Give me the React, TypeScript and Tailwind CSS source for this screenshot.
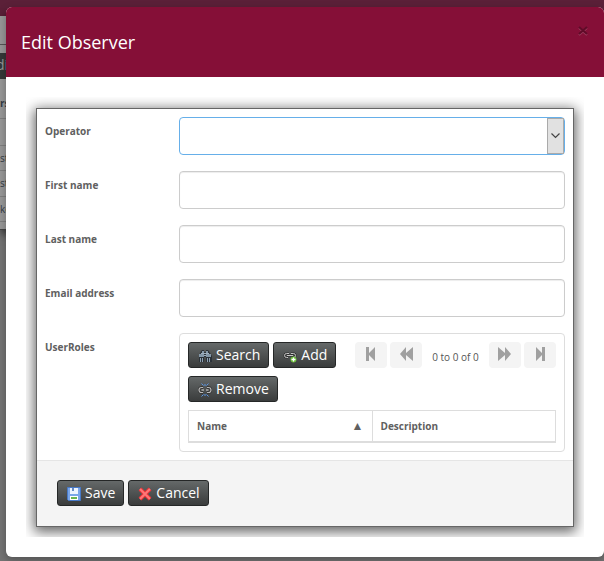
import type { ReactNode } from "react";

const darkButton =
  "inline-flex h-[26px] items-center gap-1 rounded-[3px] border border-[#252727] bg-linear-to-b from-[#656969] to-[#3a3c3c] pl-[9px] pr-2 text-[14px] leading-5 text-white";

function DarkButton({ icon, children }: { icon: ReactNode; children: ReactNode }) {
  return (
    <button type="button" className={darkButton}>
      {icon}
      <span>{children}</span>
    </button>
  );
}

function SearchIcon() {
  return (
    <svg width="14" height="14" viewBox="0 0 14 14" className="translate-y-px" aria-hidden="true">
      <path d="M4 1h2v2h2V1h2l2 3 2 3v6H8V8H6v5H1V7l1-3z" fill="#2b3239" />
      <path d="M4 2h2v2h2V2h2v2H4zM1 5h5v3H1zM8 5h5v3H8z" fill="#8497a8" />
      <path d="M3 4.500h8M6 6.500h2" stroke="#9fb0bf" />
      <path d="M2 9h1v4H2zM4 9h1v4H4zM9 9h1v4H9zM11 9h1v4h-1z" fill="#8fa2b3" />
    </svg>
  );
}

function LinkAddIcon() {
  return (
    <svg width="14" height="14" viewBox="0 0 14 14" className="translate-y-px" aria-hidden="true">
      <path d="M5 8.500H3.500a2 2 0 0 1 0-4H6M8 4.500h2.500a2 2 0 0 1 0 4H9M4 6.500h6" fill="none" stroke="#2d2d2d" strokeWidth="2" />
      <path d="M5 8.500H3.500a2 2 0 0 1 0-4H6M8 4.500h2.500a2 2 0 0 1 0 4H9M4 6.500h6" fill="none" stroke="#c5c5c5" />
      <circle cx="10.500" cy="10.500" r="3" fill="#6abd38" />
      <path d="M10.500 8.500v4M8.500 10.500h4" stroke="#fff" strokeWidth="1.300" />
    </svg>
  );
}

function LinkBreakIcon() {
  return (
    <svg width="14" height="14" viewBox="0 0 14 14" className="translate-y-px" aria-hidden="true">
      <path d="M5 9.500H3.500a2.500 2.500 0 0 1 0-5H5M9 4.500h1.500a2.500 2.500 0 0 1 0 5H9" fill="none" stroke="#2d2d2d" strokeWidth="2.500" />
      <path d="M5 9.500H3.500a2.500 2.500 0 0 1 0-5H5M9 4.500h1.500a2.500 2.500 0 0 1 0 5H9" fill="none" stroke="#b8b8b8" strokeWidth="1.200" />
      <path d="M3.500 7H6M8 7h2.500" stroke="#d8d8d8" />
      <path d="M7 1v2M3.500.5l2 2M10.500.5l-2 2M7 11v2M3.500 13.500l2-2M10.500 13.500l-2-2" stroke="#5b96e6" />
    </svg>
  );
}

function DiskIcon() {
  return (
    <svg width="14" height="14" viewBox="0 0 14 14" className="translate-y-px" aria-hidden="true">
      <path d="M.5.5h13v13h-12l-1-1z" fill="#79a5e8" stroke="#4779c7" />
      <path d="M3 1h8v6H3z" fill="#edf4ff" />
      <path d="M5 1h2v3H5z" fill="#648ac4" />
      <path d="M3 9h8v4H3z" fill="#fff" />
      <path d="M4 10h6v2H4z" fill="#69b452" />
    </svg>
  );
}

function CrossIcon() {
  return (
    <svg width="14" height="14" viewBox="0 0 14 14" className="translate-y-px" aria-hidden="true">
      <path d="M2 2 12 12M12 2 2 12" stroke="#ed3338" strokeWidth="4" />
      <path d="M2 2 12 12M12 2 2 12" stroke="#ff7777" strokeWidth="2" />
    </svg>
  );
}

const pagerPaths = {
  first: "M11 4h3v6l6-6v14l-6-6v6h-3z",
  previous: "M16 4v6l7-6v14l-7-6v6l-6-7z",
  next: "M9 4l7 6V4l6 7-6 7v-6l-7 6z",
  last: "M12 4l6 6V4h3v14h-3v-6l-6 6z",
};

function PagerButton({ kind, label }: { kind: keyof typeof pagerPaths; label: string }) {
  return (
    <button type="button" aria-label={label} className="h-[26px] w-8 rounded bg-[#f4f4f4]">
      <svg width="32" height="26" viewBox="0 -1 32 26" fill="#a0a0a0" aria-hidden="true">
        <path d={pagerPaths[kind]} />
      </svg>
    </button>
  );
}

const rowClass = "grid grid-cols-[134px_minmax(0,1fr)]";
const labelClass = "pt-2 text-[10px] leading-3 font-bold text-[#606060]";
const inputClass =
  "h-[38px] w-full rounded border border-[#ccc] bg-white px-2 text-[14px] shadow-[inset_0_1px_1px_rgba(0,0,0,0.075)] outline-none";

function TextRow({ id, label }: { id: string; label: string }) {
  return (
    <div className={rowClass}>
      <label htmlFor={id} className={labelClass}>{label}</label>
      <input id={id} type="text" className={inputClass} />
    </div>
  );
}

function PageBehind() {
  return (
    <div aria-hidden="true" className="absolute inset-0 overflow-hidden bg-[#747474] text-[10px] leading-3 text-[#333b45]">
      <div className="h-4 bg-[#5b2038]" />
      <div className="h-[214px] border-b border-[#444] bg-[#989898] shadow-[0_4px_8px_rgba(0,0,0,0.5)]">
        <div className="h-[29px] border-b border-[#555]" />
        <div className="mt-2 h-[26px] bg-[#353838] text-[14px] leading-6 text-[#999]"><span className="-ml-1">di</span></div>
        <div className="h-[40px] border-b border-[#7f7f7f] pt-[18px] font-bold">rs</div>
        <div className="h-[27px] border-b border-[#7f7f7f]" />
        <div className="h-[25px] border-b border-[#7f7f7f] pt-1.5">st</div>
        <div className="h-[26px] border-b border-[#7f7f7f] pt-1.5">st</div>
        <div className="h-[25px] border-b border-[#7f7f7f] pt-1.5">ke</div>
      </div>
    </div>
  );
}

export default function App() {
  return (
    <div className="relative min-h-screen overflow-hidden pt-[7px] pb-1 pl-1.5 font-['Open_Sans','Noto_Sans',sans-serif]">
      <PageBehind />
      <section role="dialog" aria-labelledby="dialog-title" className="relative overflow-hidden rounded-md bg-white shadow-[0_3px_9px_rgba(0,0,0,0.3)]">
        <header className="flex h-[70px] items-center justify-between bg-[#850f37] px-[15px] text-white">
          <h1 id="dialog-title" className="text-[18px] leading-6">Edit Observer</h1>
          <button type="button" aria-label="Close" className="mb-[22px] flex h-4 w-3 items-center justify-center text-[#600b28]">
            <svg width="10" height="10" viewBox="0 0 10 10" fill="none" aria-hidden="true">
              <path d="m1 2 8 7M9 2 1 9" stroke="#9b3e5e" strokeWidth="2" />
              <path d="m1 1 8 7M9 1 1 8" stroke="currentColor" strokeWidth="2" />
            </svg>
          </button>
        </header>
        <div className="p-5">
          <div className="overflow-hidden pt-[11px] pr-2.5 pb-2.5 pl-2.5">
            <form className="border border-[#666] bg-white shadow-[0_3px_12px_2px_rgba(0,0,0,0.6)]" onSubmit={(event) => event.preventDefault()}>
              <div className="flex flex-col gap-4 p-2">
                <div className={rowClass}>
                  <label htmlFor="operator" className={labelClass}>Operator</label>
                  <div className="relative">
                    <select id="operator" className="h-[38px] w-full appearance-none rounded border border-[#66afe9] bg-white px-2 pr-5 text-[14px] outline-none">
                      <option value=""></option>
                    </select>
                    <span className="pointer-events-none absolute top-px right-px bottom-px flex w-[17px] items-center justify-center border border-[#aaa] bg-[#e1e1e1]">
                      <svg width="9" height="6" viewBox="0 0 9 6" fill="none" stroke="#444" strokeWidth="1.200" aria-hidden="true"><path d="m.5.5 4 4 4-4" /></svg>
                    </span>
                  </div>
                </div>
                <TextRow id="first-name" label="First name" />
                <TextRow id="last-name" label="Last name" />
                <TextRow id="email" label="Email address" />
                <div className={rowClass}>
                  <span className={labelClass}>UserRoles</span>
                  <div className="rounded border border-[#ddd] p-2">
                    <div className="flex items-start justify-between">
                      <div className="flex flex-1 flex-wrap gap-x-1 gap-y-2">
                        <DarkButton icon={<SearchIcon />}>Search</DarkButton>
                        <DarkButton icon={<LinkAddIcon />}>Add</DarkButton>
                        <DarkButton icon={<LinkBreakIcon />}>Remove</DarkButton>
                      </div>
                      <div className="flex shrink-0 items-center gap-[3px]">
                        <PagerButton kind="first" label="First page" />
                        <PagerButton kind="previous" label="Previous page" />
                        <span className="w-[61px] pt-1 text-center text-[10px] leading-4 whitespace-nowrap text-[#555]">0 to 0 of 0</span>
                        <PagerButton kind="next" label="Next page" />
                        <PagerButton kind="last" label="Last page" />
                      </div>
                    </div>
                    <table className="mt-2 w-full table-fixed border-collapse border border-[#ddd] text-left text-[10px] leading-3 text-[#606060]">
                      <thead>
                        <tr className="h-[31px] border-b-2 border-[#ddd]">
                          <th className="border-r border-[#ddd] px-2 font-bold"><div className="flex justify-between"><span>Name</span><span aria-hidden="true" className="text-[12px]">▲</span></div></th>
                          <th className="px-2 font-bold">Description</th>
                        </tr>
                      </thead>
                    </table>
                  </div>
                </div>
              </div>
              <footer className="flex gap-1 border-t border-[#e5e5e5] bg-[#f4f4f4] px-5 pt-[19px] pb-5">
                <DarkButton icon={<DiskIcon />}>Save</DarkButton>
                <DarkButton icon={<CrossIcon />}>Cancel</DarkButton>
              </footer>
            </form>
          </div>
        </div>
      </section>
    </div>
  );
}
